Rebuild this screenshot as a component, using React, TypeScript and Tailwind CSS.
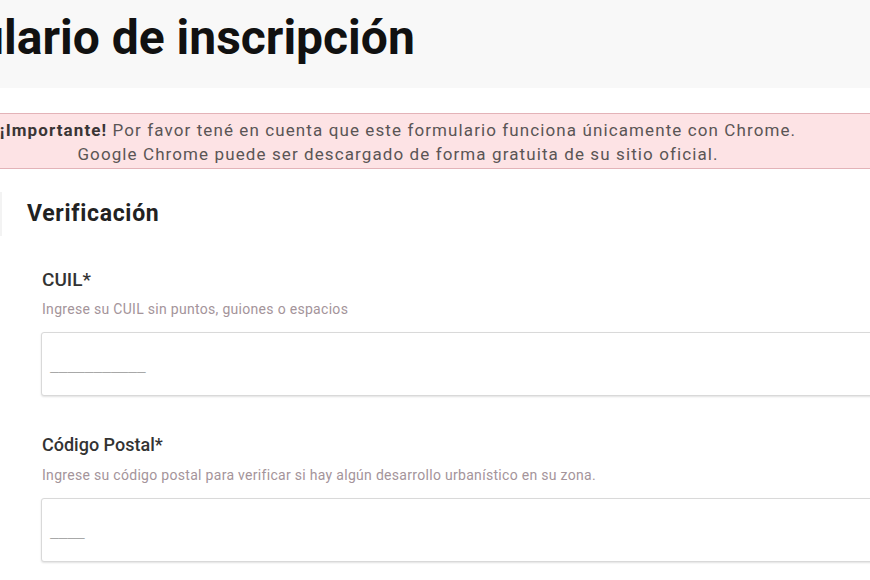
import React from "react";

function MaskedInput({ mask }: { mask: string }) {
  return (
    <div className="h-[64px] w-[900px] border border-[#d9d9d9] rounded-[3px] shadow-[0_1px_2px_rgba(0,0,0,0.12)] pl-[8px] pt-[25px] bg-white">
      <span
        className="block text-[14.5px] leading-[18px] text-[#666]"
        style={{ fontFamily: "'Liberation Mono', monospace" }}
      >
        {mask}
      </span>
    </div>
  );
}

export default function App() {
  return (
    <div className="w-[870px] h-[580px] overflow-hidden bg-white" style={{ fontFamily: "Roboto, 'Noto Sans', sans-serif" }}>
      <div className="h-[88px] bg-[#f8f8f8] overflow-hidden">
        <h1 className="ml-[-135px] pt-[10px] whitespace-nowrap text-[48px] leading-[56px] font-bold text-[#111]">
          Formulario de inscripción
        </h1>
      </div>
      <div className="mt-[25px] h-[56px] bg-[#fde3e5] border-y border-[#e3b3b8] flex flex-col justify-center">
        <div className="w-[840px] ml-[-22px] pt-[2px] text-center text-[17px] leading-[24px] tracking-[1.1px] text-[#5a5555]">
          <p className="whitespace-nowrap">
            <strong className="font-bold text-[#3a3535]">¡Importante!</strong> Por favor tené en cuenta que este formulario funciona únicamente con Chrome.
          </p>
          <p className="whitespace-nowrap">Google Chrome puede ser descargado de forma gratuita de su sitio oficial.</p>
        </div>
      </div>
      <div className="flex items-center gap-[25px] pt-[23px]">
        <div className="w-[2px] h-[44px] bg-[#f3f3f3]" />
        <h2 className="text-[23px] leading-[30px] tracking-[0.7px] font-bold text-[#222]">Verificación</h2>
      </div>
      <div className="pl-[41px] pt-[32px] flex flex-col">
        <label className="pl-[1px] text-[19px] leading-[24px] font-medium text-[#333]">CUIL*</label>
        <p className="pl-[1px] mt-[9px] text-[14px] leading-[16px] tracking-[0.3px] text-[#a4949a]">
          Ingrese su CUIL sin puntos, guiones o espacios
        </p>
        <div className="mt-[15px]">
          <MaskedInput mask="___________" />
        </div>
        <label className="mt-[37px] pl-[1px] text-[18px] leading-[24px] font-medium text-[#333]">Código Postal*</label>
        <p className="pl-[1px] mt-[10px] text-[14px] leading-[16px] tracking-[0.3px] text-[#a4949a]">
          Ingrese su código postal para verificar si hay algún desarrollo urbanístico en su zona.
        </p>
        <div className="mt-[15px]">
          <MaskedInput mask="____" />
        </div>
      </div>
    </div>
  );
}
